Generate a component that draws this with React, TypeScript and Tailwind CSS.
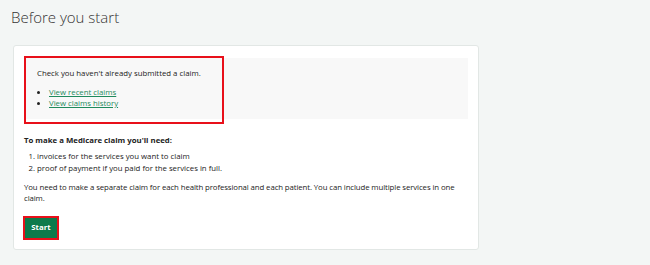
export default function App(){
  return(<div className="min-h-[265px] w-[650px] bg-[#f3f6f5] pt-[6px] font-['Open_Sans',sans-serif] text-[#222]">
    <h1 className="ml-[11px] text-[15px] leading-[22px] font-light text-[#333]">Before you start</h1>

    <div className="ml-[13px] mt-[17px] w-[466px] h-[205px] bg-white border border-[#e2e7e5] rounded-[3px] px-[10px] pt-[12px]">
      {/* recent claims box */}
      <div className="relative bg-[#f8f8f8] h-[61px] pl-[13px] pt-[10px] text-[7.8px] leading-[11px]">
        <p>Check you haven&apos;t already submitted a claim.</p>
        <ul className="mt-[8px] list-disc pl-[12px]">
          <li><a className="text-[#1f8a5c] underline">View recent claims</a></li>
          <li><a className="text-[#1f8a5c] underline">View claims history</a></li>
        </ul>
        <div className="absolute left-0 top-[-2px] w-[200px] h-[68px] border-[2px] border-[#e8101a]"/>
      </div>

      <div className="mt-[16px] text-[7.8px] leading-[11.5px]">
        <p className="font-bold">To make a Medicare claim you&apos;ll need:</p>
        <ol className="mt-[3px] list-decimal pl-[13px] leading-[12px]">
          <li>invoices for the services you want to claim</li>
          <li>proof of payment if you paid for the services in full.</li>
        </ol>
        <p className="mt-[8px] w-[440px] tracking-[-0.1px]">You need to make a separate claim for each health professional and each patient. You can include multiple services in one claim.</p>
      </div>

      <button className="mt-[11px] ml-[-1px] h-[24px] w-[36px] border-[2px] border-[#e8101a] bg-[#0c7a4b] text-white text-[7.8px] font-bold">Start</button>
    </div>
  </div>);
}
